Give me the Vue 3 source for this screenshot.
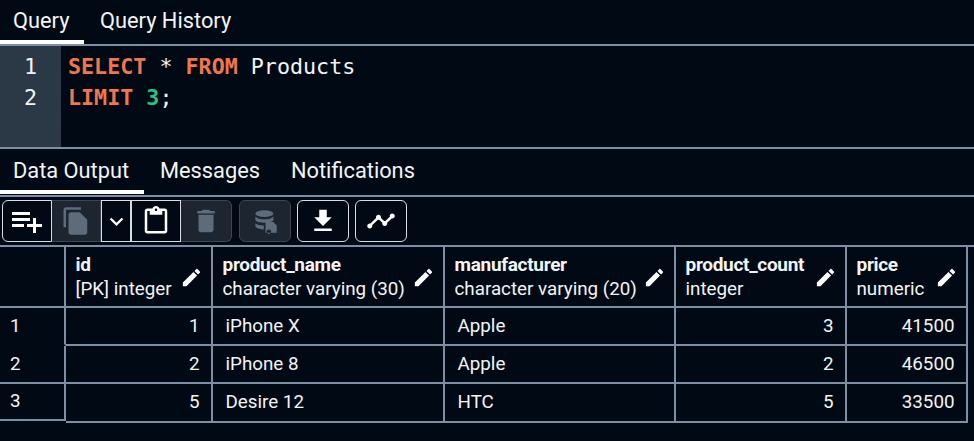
<script setup>
const columns = [
  { name: 'id', type: '[PK] integer' },
  { name: 'product_name', type: 'character varying (30)' },
  { name: 'manufacturer', type: 'character varying (20)' },
  { name: 'product_count', type: 'integer' },
  { name: 'price', type: 'numeric' },
]

const rows = [
  { n: 1, id: 1, name: 'iPhone X', maker: 'Apple', count: 3, price: 41500 },
  { n: 2, id: 2, name: 'iPhone 8', maker: 'Apple', count: 2, price: 46500 },
  { n: 3, id: 5, name: 'Desire 12', maker: 'HTC', count: 5, price: 33500 },
]

const editIcon = 'M3 17.25V21h3.75L17.81 9.94l-3.75-3.75L3 17.25zM20.71 7.04c.39-.39.39-1.02 0-1.41l-2.34-2.34c-.39-.39-1.02-.39-1.41 0l-1.83 1.83 3.75 3.75 1.83-1.83z'
</script>

<template>
  <div class="page">
    <div class="tabs top">
      <div class="tab active q">Query</div>
      <div class="tab">Query History</div>
    </div>

    <div class="editor">
      <div class="gutter">
        <div>1</div>
        <div>2</div>
      </div>
      <div class="code">
        <div><span class="kw">SELECT</span> * <span class="kw">FROM</span> Products</div>
        <div><span class="kw">LIMIT</span> <span class="num">3</span>;</div>
      </div>
    </div>

    <div class="tabs bottom">
      <div class="tab active out">Data Output</div>
      <div class="tab">Messages</div>
      <div class="tab">Notifications</div>
    </div>

    <div class="toolbar">
      <div class="group">
        <button class="btn w50 add"><svg viewBox="0 0 24 24"><path d="M14 10H2v2h12v-2zm0-4H2v2h12V6zm4 8v-4h-2v4h-4v2h4v4h2v-4h4v-2h-4zM2 16h8v-2H2v2z" /></svg></button>
        <button class="btn w49 off"><svg viewBox="0 0 24 24"><path d="M16 1H4c-1.1 0-2 .9-2 2v14h2V3h12V1zm-1 4l6 6v10c0 1.1-.9 2-2 2H7.99C6.89 23 6 22.1 6 21l.01-14c0-1.1.89-2 1.99-2h7z" /></svg></button>
        <button class="btn w30"><svg viewBox="0 0 24 24"><path d="M16.59 8.59L12 13.17 7.41 8.59 6 10l6 6 6-6z" /></svg></button>
        <button class="btn w50"><svg viewBox="0 0 24 24"><path d="M19 2h-4.18C14.4.84 13.3 0 12 0c-1.3 0-2.4.84-2.82 2H5c-1.1 0-2 .9-2 2v16c0 1.1.9 2 2 2h14c1.1 0 2-.9 2-2V4c0-1.1-.9-2-2-2zm-7 0c.55 0 1 .45 1 1s-.45 1-1 1-1-.45-1-1 .45-1 1-1zm7 18H5V4h2v3h10V4h2v16z" /></svg></button>
        <button class="btn w51 off"><svg viewBox="0 0 24 24"><path d="M6 19c0 1.1.9 2 2 2h8c1.1 0 2-.9 2-2V7H6v12zM19 4h-3.5l-1-1h-5l-1 1H5v2h14V4z" /></svg></button>
      </div>
      <button class="btn single off dbbtn">
        <svg viewBox="0 0 24 24">
          <ellipse cx="11" cy="5" rx="8" ry="3" />
          <path d="M3 7.5c1.5 1.8 4.6 2.6 8 2.6s6.500-.8 8-2.600V11c-1.500 1.300-4.500 2-8 2s-6.500-.7-8-2z" />
          <path d="M3 13.500c1.500 1.300 4.500 2 7.500 2V19c-3.500 0-6.500-.8-7.500-2.500z" />
          <path d="M12 12.500h7l3 3V22H12zM15 19a2 2 0 1 0 .01 0z" />
        </svg>
      </button>
      <button class="btn single dl"><svg viewBox="0 0 24 24"><path d="M19 9h-4V3H9v6H5l7 7 7-7zM5 18v2h14v-2H5z" /></svg></button>
      <button class="btn single gr"><svg viewBox="0 0 24 24"><path d="M23 8c0 1.100-.9 2-2 2-.18 0-.35-.02-.51-.07l-3.560 3.550c.05.16.07.34.07.52 0 1.100-.9 2-2 2s-2-.9-2-2c0-.18.02-.36.07-.52l-2.550-2.550c-.16.05-.34.07-.52.07s-.36-.02-.52-.07l-4.550 4.560c.05.16.07.33.07.51 0 1.100-.9 2-2 2s-2-.9-2-2 .9-2 2-2c.18 0 .35.02.51.07l4.560-4.550C8.020 9.360 8 9.180 8 9c0-1.100.9-2 2-2s2 .9 2 2c0 .18-.02.36-.07.52l2.550 2.550c.16-.05.34-.07.52-.07s.36.02.52.07l3.550-3.560C19.020 8.350 19 8.180 19 8c0-1.100.9-2 2-2s2 .9 2 2z" /></svg></button>
    </div>

    <div class="grid">
      <div class="cell head corner"></div>
      <div v-for="col in columns" :key="col.name" class="cell head">
        <div class="head-text">
          <div class="col-name">{{ col.name }}</div>
          <div class="col-type">{{ col.type }}</div>
        </div>
        <svg class="edit" viewBox="0 0 24 24"><path :d="editIcon" /></svg>
      </div>

      <template v-for="row in rows" :key="row.n">
        <div class="cell rownum" :class="{ last: row.n === 3, nob: row.n === 1 }">{{ row.n }}</div>
        <div class="cell right">{{ row.id }}</div>
        <div class="cell text">{{ row.name }}</div>
        <div class="cell text">{{ row.maker }}</div>
        <div class="cell right">{{ row.count }}</div>
        <div class="cell right">{{ row.price }}</div>
      </template>
    </div>
  </div>
</template>

<style scoped>
.page {
  width: 974px;
  height: 441px;
  overflow: hidden;
  background: #010a14;
  color: #f2f4f6;
  font-family: Roboto, "Liberation Sans", sans-serif;
  display: flex;
  flex-direction: column;
}

.tabs {
  display: flex;
  border-bottom: 2px solid #7f8fa3;
  box-sizing: border-box;
  font-size: 21.8px;
}
.tabs.top {
  height: 46px;
}
.tabs.bottom {
  height: 48px;
}
.tab {
  padding: 0 15px 3px 16px;
  display: flex;
  align-items: center;
  height: 100%;
  box-sizing: border-box;
  position: relative;
}
.tab.q {
  width: 84px;
  padding-left: 13px;
  padding-right: 0;
}
.tab.out {
  width: 144px;
  padding-left: 13px;
  padding-right: 0;
}
.tab.active::after {
  content: "";
  position: absolute;
  left: 0;
  right: 0;
  bottom: 0;
  height: 4px;
  background: #fff;
}
.tabs.bottom .tab.active::after {
  bottom: 1px;
}

.editor {
  height: 103px;
  display: flex;
  font-family: "DejaVu Sans Mono", monospace;
  font-size: 21.7px;
  line-height: 31px;
  border-bottom: 2px solid #7f8fa3;
  box-sizing: border-box;
}
.gutter {
  width: 61px;
  background: #2b3846;
  text-align: right;
  padding: 5px 24px 0 0;
  box-sizing: border-box;
}
.code {
  padding: 5px 0 0 7px;
}
.kw {
  color: #f0764d;
  font-weight: bold;
}
.num {
  color: #28c47f;
  font-weight: bold;
}

.toolbar {
  height: 50px;
  display: flex;
  align-items: flex-start;
  padding: 3px 0 0 2px;
  box-sizing: border-box;
  border-bottom: 2px solid #7f8fa3;
}
.group {
  display: flex;
  height: 42px;
}
.btn {
  height: 42px;
  padding: 0;
  margin: 0;
  background: #010a14;
  border: 1px solid #d8dde3;
  border-left-width: 0;
  display: flex;
  align-items: center;
  justify-content: center;
  box-sizing: border-box;
}
.btn svg {
  width: 30px;
  height: 30px;
  fill: #fff;
  flex: none;
}
.btn.add svg {
  width: 36px;
  height: 36px;
}
.btn.off {
  background: #1c2530;
  border-color: #3b4653;
}
.btn.off svg {
  fill: #5d6b7a;
}
.group .btn:first-child {
  border-left-width: 1px;
  border-radius: 6px 0 0 6px;
}
.group .btn:last-child {
  border-radius: 0 6px 6px 0;
}
.group .btn.off {
  border-left-width: 0;
}
.w50 {
  width: 50px;
}
.w49 {
  width: 49px;
}
.w30 {
  width: 30px;
  border-left-width: 1px;
}
.w30 svg {
  width: 27px;
  height: 27px;
}
.w51 {
  width: 51px;
}
.w30 + .w50 {
  border-left-width: 1px;
}
.single {
  border-left-width: 1px;
  border-radius: 6px;
}
.dbbtn {
  width: 52px;
  margin-left: 7px;
}
.dbbtn svg {
  width: 27px;
  height: 27px;
}
.dl {
  width: 52px;
  margin-left: 6px;
}
.gr {
  width: 52px;
  margin-left: 6px;
}

.grid {
  display: grid;
  width: 968px;
  grid-template-columns: 66px 147px 232px 231px 171px 121px;
  grid-template-rows: 61px 38px 38px 39px;
  font-size: 18.8px;
}
.cell {
  border-right: 2px solid #7f8fa3;
  border-bottom: 2px solid #7f8fa3;
  box-sizing: border-box;
  display: flex;
  align-items: center;
  padding-bottom: 1px;
}
.head {
  justify-content: space-between;
  padding: 0 8px 0 9.5px;
}
.corner {
  padding: 0;
}
.head-text {
  line-height: 24px;
}
.col-name {
  font-size: 19px;
  font-weight: bold;
  letter-spacing: -0.3px;
}
.col-type {
  white-space: nowrap;
}
.edit {
  width: 23px;
  height: 23px;
  margin-top: 2px;
  fill: #fff;
  flex: none;
}
.rownum {
  padding-left: 10px;
}
.rownum.nob {
  border-bottom-color: transparent;
}
.rownum.last {
  height: 37px;
}
.right {
  justify-content: flex-end;
  padding-right: 11.5px;
}
.text {
  padding-left: 12.5px;
}
</style>

<style>
html,
body {
  margin: 0;
  background: #010a14;
}
</style>
